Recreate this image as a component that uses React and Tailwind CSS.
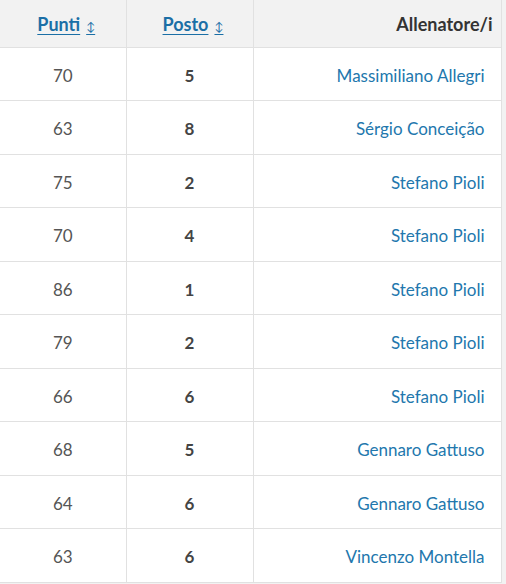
const rows = [
  ['70', '5', 'Massimiliano Allegri'],
  ['63', '8', 'Sérgio Conceição'],
  ['75', '2', 'Stefano Pioli'],
  ['70', '4', 'Stefano Pioli'],
  ['86', '1', 'Stefano Pioli'],
  ['79', '2', 'Stefano Pioli'],
  ['66', '6', 'Stefano Pioli'],
  ['68', '5', 'Gennaro Gattuso'],
  ['64', '6', 'Gennaro Gattuso'],
  ['63', '6', 'Vincenzo Montella'],
];

const SortHeader = ({ label }) => (
  <a href="#" className="text-[#1b6fa6] font-bold">
    <span className="underline underline-offset-[3px]">{label}</span>
    <span className="underline underline-offset-[3px] text-[12px] font-normal ml-[6px]">↕</span>
  </a>
);

export default function App() {
  return (
    <div className="w-[506px] h-[584px] bg-[#f2f2f2] overflow-hidden font-['Lato',sans-serif] text-[17px]">
      <table className="w-[501px] border-collapse bg-white table-fixed">
        <colgroup>
          <col className="w-[126px]" />
          <col className="w-[127px]" />
          <col className="w-[248px]" />
        </colgroup>
        <thead>
          <tr className="h-[47px] bg-[#f2f2f2] text-[18px]">
            <th className="border border-[#e1e1e1] border-t-0 border-l-0 text-center pt-[2px] pl-[7px]">
              <SortHeader label="Punti" />
            </th>
            <th className="border border-[#e1e1e1] border-t-0 text-center pt-[2px] pl-[7px]">
              <SortHeader label="Posto" />
            </th>
            <th className="border border-[#e1e1e1] border-t-0 text-right pr-[8px] pt-[2px] font-bold text-[#333]">
              Allenatore/i
            </th>
          </tr>
        </thead>
        <tbody>
          {rows.map((r, i) => (
            <tr key={i} className="h-[53.5px]">
              <td className="border border-[#e1e1e1] border-l-0 text-center text-[#555] pt-[3px]">{r[0]}</td>
              <td className="border border-[#e1e1e1] text-center font-bold text-[#444] pt-[3px]">{r[1]}</td>
              <td className="border border-[#e1e1e1] text-right pr-[16px] pt-[3px]">
                <a href="#" className="text-[#2277ad]">{r[2]}</a>
              </td>
            </tr>
          ))}
        </tbody>
      </table>
    </div>
  );
}
